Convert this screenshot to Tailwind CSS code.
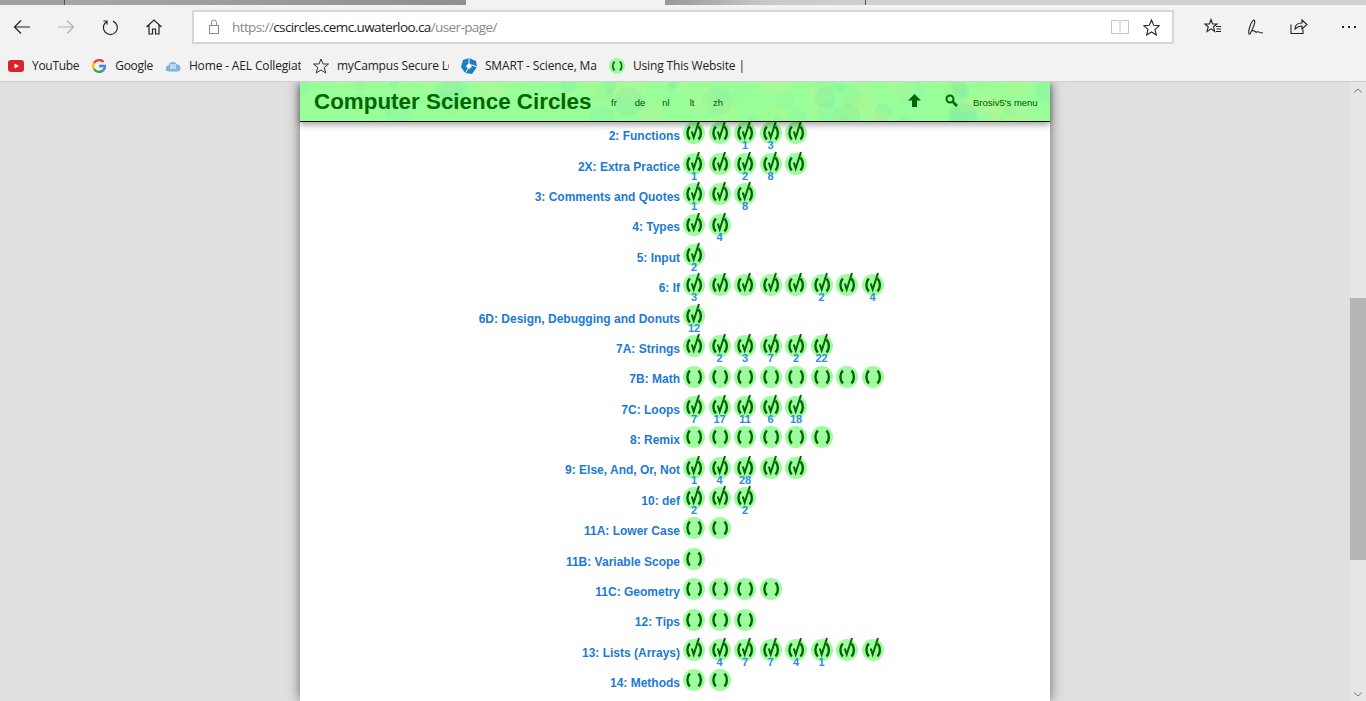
<!DOCTYPE html>
<html lang="en">
<head>
  <meta charset="UTF-8" />
  <title>User Page - Computer Science Circles</title>
  <script src="https://cdn.jsdelivr.net/npm/@tailwindcss/browser@4"></script>
</head>
<body class="h-[701px] overflow-hidden flex flex-col bg-[#e0e0e0] font-['Liberation_Sans',sans-serif]">

  <!-- browser chrome -->
  <div class="h-[82px] shrink-0 bg-[#f2f2f2] border-b border-[#cfcfcf] font-['Open_Sans',sans-serif] text-[#222]">
    <div class="h-[5px] flex">
      <div class="w-[65px] bg-[#a0a0a0] border-r border-[#555]"></div>
      <div class="w-[401px] bg-gradient-to-r from-[#a6a6a6] to-[#8f8f8f]"></div>
      <div class="w-[199px]"></div>
      <div class="w-[201px] bg-gradient-to-r from-[#999] via-[#c8c8c8] to-[#d0d0d0] border-r border-[#555]"></div>
      <div class="flex-1 bg-[#d0d0d0]"></div>
    </div>
    <div class="h-[44px] flex items-start pt-[5px] relative">
      <div class="w-[192px] flex items-center pt-[8px] pl-[13px] gap-[26px]">
        <svg class="w-[18px] h-[18px]" viewBox="0 0 18 18" fill="none" stroke="#222" stroke-width="1.2"><path d="M1.500 9h15.500M8 2.500 1.500 9 8 15.500"/></svg>
        <svg class="w-[18px] h-[18px]" viewBox="0 0 18 18" fill="none" stroke="#b0b0b0" stroke-width="1.2"><path d="M1 9h15.500M10 2.500 16.500 9 10 15.500"/></svg>
        <svg class="w-[18px] h-[18px]" viewBox="0 0 18 18" fill="none" stroke="#222" stroke-width="1.2"><path d="M6.500 2.700A7 7 0 1 0 12 2.600M6 6V2.500H2.500" transform="translate(0 .5)"/></svg>
        <svg class="w-[18px] h-[18px]" viewBox="0 0 18 18" fill="none" stroke="#222" stroke-width="1.2"><path d="M1.500 9 9 2l7.500 7M4 7v9h3.500v-5h3v5H14V7"/></svg>
      </div>
      <div class="w-[982px] h-[34px] bg-white border-2 border-[#d6d6d6] flex items-center pl-[14px] pr-[12px]">
        <svg class="w-[12px] h-[16px] mr-[12px]" viewBox="0 0 12 16" fill="none" stroke="#8a8a8a"><rect x="1.500" y="6.500" width="9" height="8"/><path d="M3.500 6.500V3.500a2.500 2.500 0 0 1 5 0v3"/></svg>
        <span class="text-[13.500px] text-[#8a8a8a] tracking-[-0.6px]">https://<span class="text-[#222]">cscircles.cemc.uwaterloo.ca</span>/user-page/</span>
        <svg class="ml-auto w-[18px] h-[16px]" viewBox="0 0 18 16" fill="none" stroke="#c4c4c4"><path d="M.5 1.500h7l1.500 1 1.500-1h7v13h-7l-1.500 1-1.500-1h-7zM9 2.500v12"/></svg>
        <svg class="ml-[14px] w-[17px] h-[17px]" viewBox="0 0 17 17" fill="none" stroke="#222" stroke-width="1.1"><path d="M8.500 1l2.200 5.200 5.600.5-4.300 3.700 1.300 5.600-4.800-3-4.800 3 1.300-5.600L.7 6.700l5.600-.5z"/></svg>
      </div>
      <div class="flex items-center pt-[8px] pl-[30px] gap-[25px]">
        <svg class="w-[18px] h-[18px]" viewBox="0 0 18 18" fill="none" stroke="#222" stroke-width="1.1"><path d="M7 1.500 8.600 6H13L9.500 8.800l1.200 4.700L7 10.800 3 13.500l1.200-4.700L.8 6h4.600zM12 8.500h5M12.500 11h4.500M12 13.500h5"/></svg>
        <svg class="w-[18px] h-[18px]" viewBox="0 0 18 18" fill="none" stroke="#222" stroke-width="1.1"><path d="M2 16c-1-3 2-13 5-14 2 0 0 7-4 14zM5 13c2-2 3 2 5 1s2 1 6 1"/></svg>
        <svg class="w-[18px] h-[18px]" viewBox="0 0 18 18" fill="none" stroke="#222" stroke-width="1.1"><path d="M1 6.500v9h12v-4M5 11c0-4 3-6 7-6V2l5 4.500-5 4.500V8c-3 0-5 1-7 3z"/></svg>
        <div class="ml-[9px] flex gap-[4px]">
          <span class="w-[2px] h-[2px] bg-[#222]"></span>
          <span class="w-[2px] h-[2px] bg-[#222]"></span>
          <span class="w-[2px] h-[2px] bg-[#222]"></span>
        </div>
      </div>
    </div>
    <div class="h-[32px] flex items-center pl-[8px] pt-[2px] text-[12px] tracking-[-0.3px]">
      <div class="flex items-center gap-[8px] mr-[13px]">
        <svg class="w-[16px] h-[12px]" viewBox="0 0 16 12"><rect width="16" height="12" rx="3" fill="#d9252a"/><path d="M6.500 3.500 11 6l-4.500 2.500z" fill="#fff"/></svg>
        <span>YouTube</span>
      </div>
      <div class="flex items-center gap-[9px] mr-[12px]">
        <svg class="w-[14px] h-[14px]" viewBox="0 0 14 14" fill="none" stroke-width="2.4"><path d="M11.600 3A6 6 0 0 0 2 4" stroke="#ea4335"/><path d="M2 4a6 6 0 0 0 0 6" stroke="#fbbc05"/><path d="M2 10a6 6 0 0 0 9 1.500" stroke="#34a853"/><path d="M11 11.500A6 6 0 0 0 13 7H7" stroke="#4285f4"/></svg>
        <span>Google</span>
      </div>
      <div class="flex items-center gap-[8px] mr-[12px]">
        <svg class="w-[16px] h-[14px]" viewBox="0 0 16 14"><path d="M4 12.500a3 3 0 0 1-.5-6A4.500 4.500 0 0 1 12 5.500a3.500 3.500 0 0 1 0 7z" fill="#7db5dd"/><rect x="5" y="5" width="6" height="5" fill="#b9d9ee"/></svg>
        <span class="w-[112px] overflow-hidden whitespace-nowrap tracking-[-0.15px]">Home - AEL Collegiate</span>
      </div>
      <div class="flex items-center gap-[8px] mr-[12px]">
        <svg class="w-[16px] h-[16px]" viewBox="0 0 16 16" fill="none" stroke="#333"><path d="M8 1l2 5h5.500l-4.300 3.500 1.600 5.500L8 12l-4.800 3 1.600-5.500L.5 6H6z"/></svg>
        <span class="w-[112px] overflow-hidden whitespace-nowrap tracking-[-0.15px]">myCampus Secure Login</span>
      </div>
      <div class="flex items-center gap-[8px] mr-[12px]">
        <svg class="w-[16px] h-[16px]" viewBox="0 0 16 16"><path d="M8 0l7 3 1 6-5 7-7-1-4-6 2-7z" fill="#1b7fc4"/><path d="M8 5l3 2-1 3-3 1-2-3z" fill="#fff"/><path d="M8 0v5M16 9l-5-2M4 15l3-4" stroke="#fff"/></svg>
        <span class="w-[112px] overflow-hidden whitespace-nowrap tracking-[-0.15px]">SMART - Science, Math</span>
      </div>
      <div class="flex items-center gap-[8px]">
        <svg class="w-[16px] h-[16px]" viewBox="0 0 16 16" fill="none"><circle cx="8" cy="8" r="8" fill="#a0faa0"/><path d="M5.500 3.500A7 7 0 0 0 5.500 12.500M11 3.500A7 7 0 0 1 11 12.500" stroke="#006600" stroke-width="1.800"/></svg>
        <span class="w-[112px] overflow-hidden whitespace-nowrap tracking-[-0.15px]">Using This Website | CS Circles</span>
      </div>
    </div>
  </div>

  <!-- page area -->
  <div class="flex-1 min-h-0 flex">
    <div class="flex-1 min-w-0 flex justify-center overflow-hidden">
      <div class="relative w-[750px] bg-white shadow-[0_0_12px_rgba(0,0,0,0.55)]">
        <header class="absolute inset-x-0 top-0 z-10 h-[40px] bg-[#99ff99] border-b-[1.500px] border-black shadow-[0_3px_6px_rgba(0,0,0,0.35)] flex items-center pl-[14px] text-[#006600]">
          <svg id="bubbles" class="absolute inset-0" width="750" height="39"></svg>
          <h1 class="relative w-[287px] text-[22.400px] font-bold whitespace-nowrap pt-[1px]">Computer Science Circles</h1>
          <nav class="relative flex text-[9.500px] pt-[3px] w-[307px] text-[#005500]">
            <span class="w-[26px] text-center">fr</span>
            <span class="w-[26px] text-center">de</span>
            <span class="w-[26px] text-center">nl</span>
            <span class="w-[26px] text-center">lt</span>
            <span class="w-[26px] text-center">zh</span>
          </nav>
          <svg class="relative w-[13px] h-[13px] mr-[24px] mb-[2px]" viewBox="0 0 13 13" fill="#006600"><path d="M6.500 0 13 6.500H9V13H4V6.500H0z"/></svg>
          <svg class="relative w-[13px] h-[13px] mr-[15px] mb-[2px]" viewBox="0 0 13 13" fill="none" stroke="#006600"><circle cx="5" cy="5" r="3.500" stroke-width="2"/><path d="M8 8l4 4" stroke-width="2.500"/></svg>
          <span class="relative text-[9.500px] pt-[3px] whitespace-nowrap text-[#005500]">Brosiv5's menu</span>
        </header>
        <div id="rows" class="pt-[36.200px] h-[619px] overflow-hidden"></div>
      </div>
    </div>
    <div class="w-[16px] shrink-0 bg-[#e6e6e6] flex flex-col items-center relative">
      <svg class="absolute top-[6px] w-[10px] h-[5px]" viewBox="0 0 10 5" fill="none" stroke="#777"><path d="M1 4.500 5 1l4 3.500"/></svg>
      <div class="mt-[216px] h-[262px] w-full bg-[#b6b6b6]"></div>
      <svg class="absolute bottom-[4px] w-[10px] h-[5px]" viewBox="0 0 10 5" fill="none" stroke="#777"><path d="M1 .5 5 4l4-3.500"/></svg>
    </div>
  </div>

  <script>
    // c = solved, o = not yet; number = attempts shown under the mark
    const lessons = [
      ['2: Functions', 'c', ['', '', 1, 3, '']],
      ['2X: Extra Practice', 'c', [1, '', 2, 8, '']],
      ['3: Comments and Quotes', 'c', [1, '', 8]],
      ['4: Types', 'c', ['', 4]],
      ['5: Input', 'c', [2]],
      ['6: If', 'c', [3, '', '', '', '', 2, '', 4]],
      ['6D: Design, Debugging and Donuts', 'c', [12]],
      ['7A: Strings', 'c', ['', 2, 3, 7, 2, 22]],
      ['7B: Math', 'o', Array(8).fill('')],
      ['7C: Loops', 'c', [7, 17, 11, 6, 18]],
      ['8: Remix', 'o', Array(6).fill('')],
      ['9: Else, And, Or, Not', 'c', [1, 4, 28, '', '']],
      ['10: def', 'c', [2, '', 2]],
      ['11A: Lower Case', 'o', Array(2).fill('')],
      ['11B: Variable Scope', 'o', Array(1).fill('')],
      ['11C: Geometry', 'o', Array(4).fill('')],
      ['12: Tips', 'o', Array(3).fill('')],
      ['13: Lists (Arrays)', 'c', ['', 4, 7, 7, 4, 1, '', '']],
      ['14: Methods', 'o', Array(2).fill('')],
    ];

    function mark(kind, num) {
      const check = kind === 'c'
        ? '<path d="M8.800 9.500 10.700 15.500 16 -1" stroke-width="2"/>'
        : '';
      const badge = num !== ''
        ? `<span class="absolute left-[-6px] right-[-6px] top-[17px] text-center text-[11px] leading-[12px] font-bold text-[#2e8ce6]">${num}</span>`
        : '';
      return `<div class="relative w-[22px] h-[22px]">
        <svg class="block overflow-visible" width="22" height="22" viewBox="0 0 22 22" fill="none" stroke="#006600" stroke-width="2.400">
          <circle cx="11" cy="11" r="11" fill="#a0faa0" stroke="none"/>
          <path d="M6.800 4.500A10 10 0 0 0 6.800 17.500M15.500 4.500A10 10 0 0 1 15.500 17.500"/>${check}
        </svg>${badge}</div>`;
    }

    document.getElementById('rows').innerHTML = lessons.map(([name, kind, nums]) => `
      <div class="h-[30.400px] flex items-center">
        <div class="w-[380px] text-right text-[12px] font-bold text-[#1c7ad4] pt-[5.600px]">${name}</div>
        <div class="flex gap-[3.500px] ml-[3px]">${nums.map(n => mark(kind, n)).join('')}</div>
      </div>`).join('');

    // header background bubbles, fixed seed so the picture stays the same
    let seed = 7;
    const rnd = () => (seed = (seed * 16807) % 2147483647) / 2147483647;
    const tints = ['#77e8b0', '#b4f080', '#88f0a0', '#d4f090', '#99ffb0', '#70dda8'];
    let bubbles = '';
    for (let i = 0; i < 110; i++) {
      bubbles += `<circle cx="${rnd() * 750}" cy="${rnd() * 40}" r="${4 + rnd() * 11}" fill="${tints[Math.floor(rnd() * 6)]}" opacity="0.2"/>`;
    }
    document.getElementById('bubbles').innerHTML = bubbles;
  </script>
</body>
</html>
